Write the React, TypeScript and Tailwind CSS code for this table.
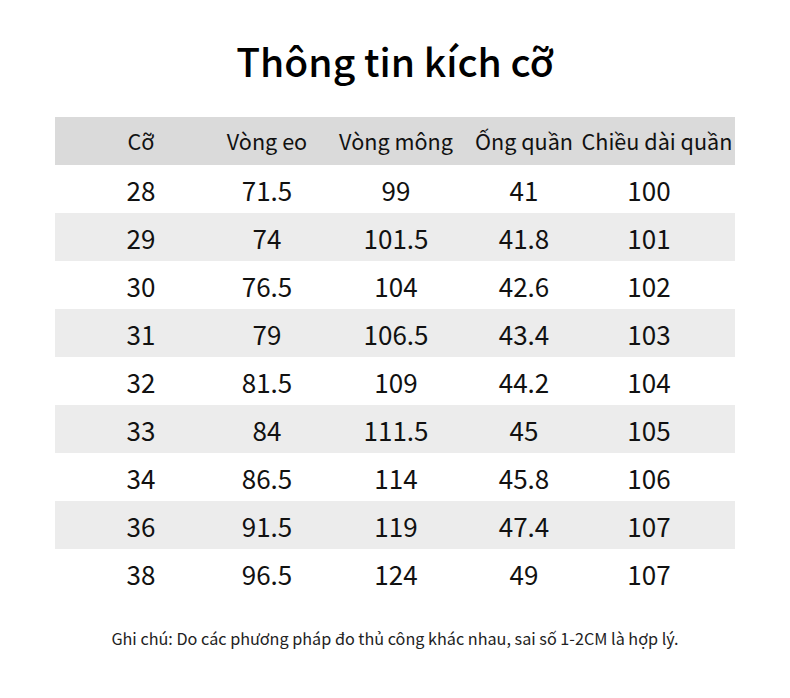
import React from "react";

const headers = ["Cỡ", "Vòng eo", "Vòng mông", "Ống quần", "Chiều dài quần"];

const rows = [
    ["28", "71.5", "99", "41", "100"],
    ["29", "74", "101.5", "41.8", "101"],
    ["30", "76.5", "104", "42.6", "102"],
    ["31", "79", "106.5", "43.4", "103"],
    ["32", "81.5", "109", "44.2", "104"],
    ["33", "84", "111.5", "45", "105"],
    ["34", "86.5", "114", "45.8", "106"],
    ["36", "91.5", "119", "47.4", "107"],
    ["38", "96.5", "124", "49", "107"],
];

const grid = "grid grid-cols-[172px_80px_178px_78px_172px]";

export default function App() {
    return (
        <main
            className="h-[698px] w-[790px] bg-white text-[#111]"
            style={{ fontFamily: '"Noto Sans CJK SC", "Noto Sans", sans-serif' }}
        >
            <h1 className="pt-[30px] text-center text-[39px] leading-[60px] font-medium text-black">
                Thông tin kích cỡ
            </h1>

            <section className="mx-[55px] mt-[27px] w-[680px]">
                <div className={`${grid} h-[48px] items-center bg-[#dadada] text-[21.6px]`}>
                    {headers.map((h, i) => (
                        <div
                            key={i}
                            className={`flex justify-center whitespace-nowrap ${i === 4 ? "pl-[16px]" : ""}`}
                        >
                            {h}
                        </div>
                    ))}
                </div>

                {rows.map((row, r) => (
                    <div
                        key={r}
                        className={`${grid} h-[48px] items-center text-[26px] ${r % 2 === 1 ? "bg-[#ececec]" : "bg-white"}`}
                    >
                        {row.map((v, i) => (
                            <div key={i} className="flex justify-center whitespace-nowrap">
                                {v}
                            </div>
                        ))}
                    </div>
                ))}
            </section>

            <p className="mt-[29px] text-center text-[16.2px] text-[#222]">
                Ghi chú: Do các phương pháp đo thủ công khác nhau, sai số 1-2CM là hợp lý.
            </p>
        </main>
    );
}
